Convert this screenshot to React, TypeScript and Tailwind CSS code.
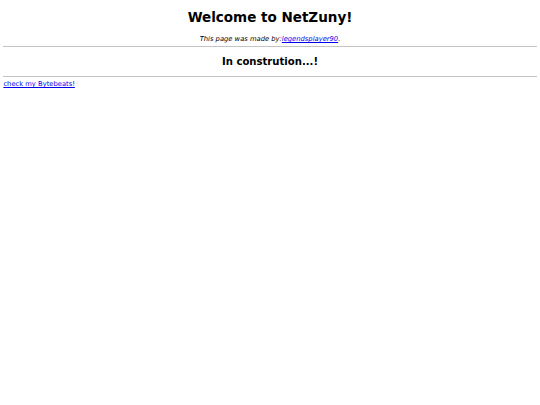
export default function App() {
  return (
    <div className="min-h-[405px] bg-white px-[3.4px] text-black [font-family:'DejaVu_Sans',Verdana,sans-serif]">
      <h1 className="pt-[9.3px] text-center text-[13.5px] font-bold leading-[16px]">Welcome to NetZuny!</h1>
      <p className="mt-[9.7px] text-center text-[6.75px] italic leading-[8px]">
        This page was made by:
        <a href="#" className="text-[#0000ee] underline">
          legendsplayer90
        </a>
        .
      </p>
      <div className="mt-[3px] h-px bg-[#c4c4c4]" />
      <h2 className="mt-[9.2px] text-center text-[10.1px] font-bold leading-[12px]">In constrution...!</h2>
      <div className="mt-[7.8px] h-px bg-[#c4c4c4]" />
      <a href="#" className="mt-[3.4px] block w-fit text-[6.75px] leading-[8px] text-[#0000ee] underline">
        check my Bytebeats!
      </a>
    </div>
  );
}
